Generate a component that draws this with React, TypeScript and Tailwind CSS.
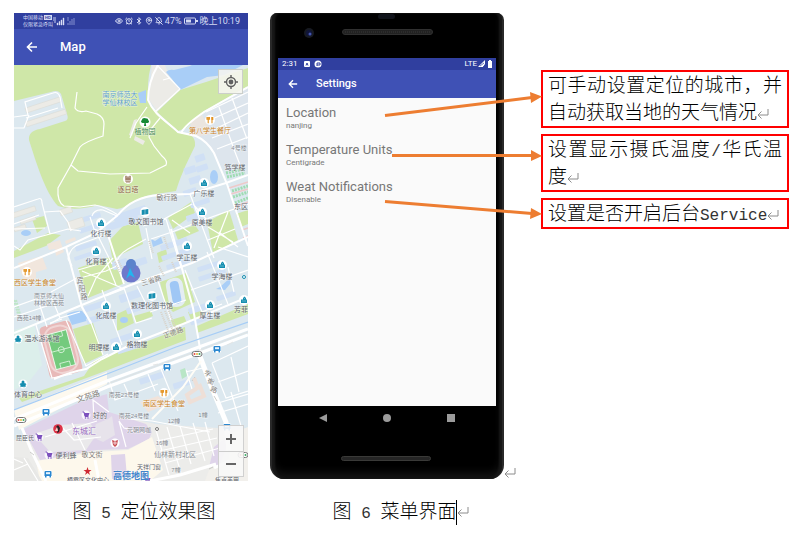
import React from "react";
import { Eye, AlarmClock, Bluetooth, MapPin, BellOff, LocateFixed } from "lucide-react";

type Label = { t: string; x: number; y: number; s?: number; c?: string; r?: number; b?: boolean };

const ORANGE = "#c98224";
const GRAY = "#858a91";
const ROAD = "#84807a";

const labels: Label[] = [
  { t: "南京师范大", x: 120, y: 97, c: "#5e9fd0" },
  { t: "学仙林校区", x: 120, y: 105, c: "#5e9fd0" },
  { t: "植物园", x: 145, y: 134, c: "#4f8d62" },
  { t: "第八学生餐厅", x: 210, y: 133, c: ORANGE },
  { t: "4号楼", x: 239, y: 150, c: GRAY, s: 6 },
  { t: "笃学楼", x: 235, y: 170 },
  { t: "逐日塔", x: 128, y: 192, c: "#8b5f45" },
  { t: "敏行路", x: 167, y: 200, c: ROAD },
  { t: "广乐楼", x: 204, y: 196 },
  { t: "东区", x: 241, y: 209 },
  { t: "敬文图书馆", x: 146, y: 224 },
  { t: "原美楼", x: 202, y: 225 },
  { t: "化行楼", x: 101, y: 236 },
  { t: "化育楼", x: 96, y: 264 },
  { t: "学正楼", x: 187, y: 260 },
  { t: "学海楼", x: 222, y: 279 },
  { t: "西区学生食堂", x: 35, y: 285, c: ORANGE },
  { t: "南京师大仙", x: 49, y: 298, c: GRAY, s: 6 },
  { t: "林校区西苑", x: 49, y: 305, c: GRAY, s: 6 },
  { t: "宾", x: 80, y: 283, c: ROAD },
  { t: "阳", x: 82, y: 291, c: ROAD },
  { t: "路", x: 84, y: 299, c: ROAD },
  { t: "三省路", x: 152, y: 283, c: ROAD, r: -17 },
  { t: "数理化图书馆", x: 152, y: 308 },
  { t: "化成楼", x: 106, y: 318 },
  { t: "西苑14幢", x: 29, y: 320, c: GRAY, s: 6 },
  { t: "厚生楼", x: 210, y: 318 },
  { t: "芳菲", x: 241, y: 312 },
  { t: "正德路", x: 174, y: 335, c: ROAD, r: -20 },
  { t: "温水游泳馆", x: 42, y: 341 },
  { t: "明理楼", x: 99, y: 350 },
  { t: "格物楼", x: 137, y: 347 },
  { t: "体育中心", x: 28, y: 397 },
  { t: "文苑路", x: 89, y: 399, c: ROAD, r: -17, s: 8 },
  { t: "南苑23号楼", x: 124, y: 397, c: GRAY, s: 6 },
  { t: "南区学生食堂", x: 164, y: 406, c: ORANGE },
  { t: "学", x: 207, y: 376, c: ROAD, r: 20 },
  { t: "衡", x: 210, y: 384, c: ROAD, r: 20 },
  { t: "路", x: 213, y: 392, c: ROAD, r: 20 },
  { t: "好的", x: 100, y: 418 },
  { t: "南苑24号楼", x: 134, y: 418, c: GRAY, s: 6 },
  { t: "12幢", x: 174, y: 423, c: GRAY, s: 6 },
  { t: "1幢", x: 203, y: 417, c: GRAY, s: 6 },
  { t: "东城汇", x: 84, y: 434, c: "#9668c0", s: 8 },
  { t: "元朝网咖", x: 139, y: 432, c: GRAY, s: 6 },
  { t: "屈臣氏", x: 25, y: 440, s: 6 },
  { t: "16幢", x: 162, y: 445, c: GRAY, s: 6 },
  { t: "仙林新村北区", x: 175, y: 457, c: GRAY },
  { t: "便利蜂", x: 66, y: 458 },
  { t: "敬文街", x: 92, y: 457, c: ROAD },
  { t: "天祥门窗", x: 149, y: 469, s: 6 },
  { t: "7幢", x: 176, y: 472, c: GRAY, s: 6 },
  { t: "栖霞区文化中心", x: 88, y: 482, s: 6 },
  { t: "焦点美甲", x: 227, y: 482, s: 6 },
  { t: "高德地图", x: 131, y: 479, c: "#4385cc", s: 9, b: true },
];

const halls = [
  [204, 183], [202, 212], [101, 223], [96, 251], [187, 246], [222, 265],
  [106, 306], [210, 305], [244, 300], [137, 334], [116, 347],
];
const books = [[145, 212], [152, 296]];
const forks = [[210, 120], [27, 272], [164, 393]];
const buses = [[217, 349], [167, 367], [46, 412], [48, 474], [227, 427]];
const carts = [[86, 415], [39, 437], [49, 455], [147, 480]];
const pools = [[18, 339], [23, 384]];
const signals = [[197, 354], [21, 420], [243, 455]];

const buildings = [
  [92, 217, 18, 5], [90, 228, 22, 5], [86, 246, 22, 5], [84, 256, 20, 4],
  [130, 214, 34, 8], [122, 223, 34, 7], [174, 244, 28, 6], [176, 254, 30, 5],
  [178, 264, 24, 5], [210, 266, 26, 5], [212, 275, 28, 5], [130, 296, 22, 8],
  [138, 308, 24, 6], [96, 306, 24, 6], [98, 318, 24, 6], [124, 338, 28, 6],
  [130, 348, 26, 5], [200, 308, 24, 6], [200, 320, 20, 5], [226, 296, 20, 5],
  [190, 192, 14, 6], [200, 203, 20, 5], [196, 216, 20, 6], [190, 170, 12, 7],
  [202, 168, 12, 6], [195, 180, 12, 7], [200, 158, 10, 7], [152, 378, 26, 6],
  [182, 384, 18, 6], [120, 264, 16, 8], [140, 262, 14, 7],
];

const dorms = [
  [24, 212, 24, 5], [28, 220, 16, 4], [20, 228, 12, 4],
  [66, 211, 12, 6], [76, 224, 16, 9], [43, 105, 36, 5], [46, 118, 42, 5],
];

function MapDrawing() {
  return (
    <svg viewBox="14 65 234 416" className="block h-auto w-full" role="img" aria-label="校园地图">
      <rect x="14" y="65" width="234" height="416" fill="#dce8ef" />

      {/* parkland */}
      <g fill="#cfe7a8">
        <path d="M14 65H151Q146 85 149 102C153 114 168 124 177 132L190 135Q196 138 195 146C185 166 180 178 176 191L150 195C135 198 128 208 117 209L98 205Q74 212 58 206C45 192 36 162 29 140Q28 131 40 129L65 121Q69 120 67 114L61 94Q58 89 51 92L14 101Z" />
        <path d="M157 112L180 90L206 82L248 68V86L204 111L186 128L178 131Z" />
        <path d="M109 241L123 226L138 222L143 244L118 256L113 262Z" />
        <path d="M168 218L191 202L195 213L173 229Z" />
        <path d="M175 232L195 225L199 231L178 240Z" />
        <path d="M207 222L229 210L238 240L213 253Z" />
        <path d="M14 251L48 233L61 235L46 246L14 258Z" />
        <path d="M32 219L44 216L47 226L37 233Z" />
        <path d="M236 214L248 210V224L241 227Z" />
        <path d="M78 268L110 257L125 283L88 298Z" />
        <path d="M157 253L166 249L168 259L159 263Z" />
        <path d="M160 282L186 273L195 302L173 312L165 304Z" />
        <path d="M117 314L130 308L134 323L117 331Z" />
        <path d="M134 316L151 311L153 316L136 323Z" />
        <path d="M171 320L184 316L187 323L174 329Z" />
        <path d="M188 312L201 308L204 315L191 320Z" />
        <path d="M73 329L93 323L103 355L84 364Z" />
        <path d="M197 326L248 304V314L197 333Z" />
        <path d="M19 398L84 376L94 361L185 327L186 340L108 370L22 402Z" />
      </g>

      {/* pavement and dormitory quarters */}
      <path d="M152 65H165L170 78L180 90L157 111L149 100Z" fill="#ecebe7" />
      <path d="M205 113L248 88V165L228 178L214 151L192 132Z" fill="#dde5ed" />
      <path d="M191 121L202 115L212 134L194 137L190 131Z" fill="#ebe5df" />
      <path d="M14 330L34 324L42 365L28 383L14 390Z" fill="#dcefeb" />

      {/* water */}
      <g fill="#a9cef7">
        <path d="M166 72Q169 69 174 70L190 66L192 65H243L224 75L207 77L180 90L172 79Z" />
        <path d="M138 93L146 90V103H140Z" />
        <path d="M67 314Q77 310 82 311L90 320L72 325Z" />
        <path d="M151 239L155 241L161 237L163 243L153 247Z" />
        <path d="M220 287L231 277L230 284L225 290L216 289Z" />
        <ellipse cx="124" cy="320" rx="4" ry="3" />
        <ellipse cx="214" cy="177" rx="4" ry="7" />
        <ellipse cx="26" cy="233" rx="5" ry="3" />
      </g>
      <rect x="167" y="278" width="17" height="29" rx="7" fill="#e4edf3" transform="rotate(-10 175 292)" />
      <rect x="171" y="281" width="9" height="23" rx="4" fill="#9fc7f5" transform="rotate(-10 175 292)" />

      {buildings.map(([x, y, w, h], i) => (
        <rect key={i} x={x - w / 2} y={y - h / 2} width={w} height={h} rx="1" fill="#d0e0f5" transform={`rotate(-18 ${x} ${y})`} />
      ))}
      {dorms.map(([x, y, w, h], i) => (
        <rect key={i} x={x - w / 2} y={y - h / 2} width={w} height={h} fill="#ecebe6" stroke="#dadbd4" strokeWidth="0.5" transform={`rotate(-18 ${x} ${y})`} />
      ))}
      <path d="M134 120L137 119L132 136L129 135ZM135 136L145 141L143 145L134 140Z" fill="#ecebe6" />
      <path d="M18 263L42 256L47 269L36 272L36 279L24 281ZM47 244L60 240L64 252L56 256L55 249L49 250ZM65 241L75 237L76 240L66 244Z" fill="#f1e6dd" />
      <path d="M226 173L244 169M227 177L245 173M232 191L248 186M233 197L248 192M235 203L248 198" stroke="#9fdcb3" strokeWidth="3" strokeDasharray="2 1" />
      <path d="M229 188L248 182M231 194L248 189M235 207L248 202M242 230L248 228M243 238L248 236" stroke="#eec9c9" strokeWidth="1.5" />
      <path d="M14 300L18 314M16 300L20 314" stroke="#bfe6c8" strokeWidth="2" strokeDasharray="2 1" />

      {/* southern blocks */}
      <path d="M105 413L156 424L248 430V481H14V440L60 423Z" fill="#ececea" />
      <path d="M14 410L107 372V384L19 430Z" fill="#fdf9ef" />
      <path d="M24 429L80 402L107 394L109 412L146 424L152 432L149 439L128 449L96 450L40 460L26 434Z" fill="#dfd4ea" />
      <path d="M34 434L61 425L90 423L98 434L92 441L86 450L50 452Z" fill="#eae9eb" />
      <path d="M108 419L112 416L115 435L103 442L92 437L96 424Z" fill="#e7e3eb" />
      <path d="M36 461L96 452L128 450L152 437L158 455L163 470L150 481H40Z" fill="#fdf8ec" />
      <path d="M14 457L28 458L42 481H14Z" fill="#e8e8e6" />
      <path d="M111 455L125 454L127 477L112 479Z" fill="#dfd4ea" />
      <path d="M209 467L214 447L232 433L220 465Z" fill="#dfd4ea" />
      <path d="M232 433L248 427V481H205L209 470L229 461Z" fill="#f2f0ec" />

      {/* stadium */}
      <g transform="rotate(-15 60 349)">
        <path d="M45 327Q45 323 50 323H71Q77 323 77 328V371Q77 376 72 376H48Q43 376 43 371Z" fill="#e8b9b8" />
        <rect x="47" y="326" width="28" height="47" rx="12" fill="none" stroke="#f0d5d4" strokeWidth="2" />
        <rect x="51" y="332" width="20" height="36" fill="#74ca7d" stroke="#e9f8e9" />
        <path d="M51 350H71M56 332V337H66V332M56 368V363H66V368" stroke="#e9f8e9" fill="none" strokeWidth="0.7" />
        <circle cx="61" cy="350" r="3" fill="none" stroke="#e9f8e9" strokeWidth="0.7" />
      </g>

      {/* local streets */}
      <g fill="none" stroke="#ffffff" strokeWidth="1.2">
        <path d="M77 92L75 108Q78 113 86 111L97 114Q104 117 104 124L103 136Q84 142 80 147L71 165L78 171L110 174L150 173L166 165Q168 161 162 156L154 146L149 137L151 129L160 118" />
        <path d="M71 165L58 188Q57 202 64 206L80 207L95 205Q106 207 118 215" />
        <path d="M14 117L28 115L25 102L53 93Q58 91 60 97L62 108M14 128L24 128L29 115M26 118L58 108" />
        <path d="M157 65L180 89L155 112M147 107L136 123L130 138M163 80L170 78" />
        <path d="M206 112L248 92M210 120L248 103M213 130L248 113M212 138L248 124M217 149L248 137M219 107L235 152M232 98L247 139M235 152L242 170" />
        <path d="M14 207L38 199Q42 197 42 203L50 234M44 212L60 211L68 222L71 231M14 224L39 215M14 246L20 250L28 240L50 234L68 229L81 231M14 229L45 228" />
        <path d="M92 216Q94 209 103 210L117 216M90 217L94 229L110 235M68 259Q70 247 80 244L108 234M68 259L72 266M112 264L96 232" />
        <path d="M117 262Q118 255 128 249L146 239M146 228L152 259M143 226L166 219L181 267M151 239L172 232L206 219M164 219L192 204M172 220L190 233" />
        <path d="M190 194L214 258M193 204L206 219L248 204M208 227L233 242M214 248L228 212M208 240L235 229M219 232L238 247" />
        <path d="M78 270L102 263L108 259M80 278L106 271L119 265M88 296L96 278L113 258M82 271L122 288M106 260L116 285" />
        <path d="M14 307L50 294L60 318L80 312M37 297L47 327M14 317L47 306M51 292L77 278M60 318L50 324M90 320L103 355" />
        <path d="M50 323L62 319M66 320L86 366L108 354M36 325L52 378L72 374M102 290L122 345M124 288L136 323L152 318M106 296L124 289M137 286L148 308" />
        <path d="M158 281L171 320M185 270L202 312L222 304M191 290L248 270M207 252L228 304M218 247L248 257M228 267L234 292M150 312L186 300" />
        <path d="M109 380L115 400L158 384M148 374L155 391M124 384L130 397M161 369L178 411M186 370L192 389M181 373L203 368M212 363L226 398L248 391M212 363L248 346M218 382L248 371M231 392L241 426M218 403L248 394M218 413L248 404M231 357L239 392" />
        <path d="M156 430L169 475M167 427L181 473M180 426L191 464M193 423L205 461M205 422L214 456M157 441L213 429M160 451L217 438M165 463L220 448M119 421L124 428L146 433M119 421L126 447M61 426L74 440L101 437M45 437L97 421M72 423L85 450M94 420L93 400L109 412" />
        <path d="M119 418L152 421L210 432M14 459L23 463M24 458L38 481M14 470L28 464" />
      </g>

      {/* avenues */}
      <g fill="none" stroke="#ffffff" strokeWidth="2">
        <path d="M158 65Q148 82 148 100C154 115 168 122 178 132L196 136Q207 141 214 153L227 184L248 246" />
        <path d="M181 133Q185 125 204 112L248 87" />
        <path d="M118 215Q132 197 159 195L190 194L226 183L248 175" />
        <path d="M118 215L96 233L66 247L14 268" />
        <path d="M14 333L77 307L128 286L192 263L248 237" />
        <path d="M54 379Q70 372 86 369L102 359L132 344L183 324L248 297" />
        <path d="M171 229L193 308L201 354" />
        <path d="M108 235L124 284M66 247L82 307L91 323" />
      </g>

      {/* trunk road and metro line */}
      <path d="M14 410L102 376L176 347L248 322" fill="none" stroke="#a6cdf6" strokeWidth="1.2" />
      <path d="M14 419L107 381L199 347L248 329" fill="none" stroke="#ffffff" strokeWidth="3" />
      <path d="M14 426L107 387L200 353L248 335" fill="none" stroke="#ffffff" strokeWidth="3" />
      <path d="M107 384L200 350L248 332M153 365L158 364M227 345L233 342" fill="none" stroke="#e0e1df" strokeWidth="0.8" />
      <path d="M199 354L212 388L226 422L229 450" fill="none" stroke="#ffffff" strokeWidth="5" />
      <path d="M201 361L183 387L152 419" fill="none" stroke="#fffdf7" strokeWidth="2" />
      <path d="M22 428L32 452L46 481M95 460L99 481M216 464L180 475L150 481M214 468L229 461" fill="none" stroke="#ffffff" strokeWidth="3" />
      <path d="M214 396L217 401M30 452L34 455M192 381L195 377M209 469L213 467" fill="none" stroke="#b9b9b6" strokeWidth="0.7" />
      <path d="M115 262L120 272M118 260L123 270M161 312L169 333M165 311L173 331M168 309L176 329M149 241L153 253M164 237L168 249M159 266L164 276M172 262L176 272" stroke="#d9d3c9" strokeWidth="2" strokeDasharray="1 1" />
      <path d="M187 395L200 386L204 396L190 402ZM197 386L194 378" stroke="#eedfd7" strokeWidth="4" fill="none" />
      <path d="M180 370L185 368L187 376L182 379Z" fill="#b9e6c6" />
      <path d="M140 402L158 396L168 404L148 412Z" fill="#f1e3da" />

      {/* points of interest */}
      {halls.map(([x, y], i) => (
        <g key={i} transform={`translate(${x} ${y})`}>
          <circle r="5" fill="#fff" />
          <path d="M-3 3V-.5H-1V-2L.5-3.5L2-2V-.5H3V3Z" fill="#168eb0" />
          <path d="M0-1.5H1M-2 1H2" stroke="#a5dce8" strokeWidth=".5" />
        </g>
      ))}
      {books.map(([x, y], i) => (
        <g key={i} transform={`translate(${x} ${y})`}>
          <circle r="5" fill="#fff" />
          <path d="M-3.3-2L-.2-2.6V2.6L-3.3 3ZM.2-2.6L3.3-3V2L.2 2.6Z" fill="#168eb0" />
        </g>
      ))}
      {forks.map(([x, y], i) => (
        <g key={i} transform={`translate(${x} ${y})`}>
          <circle r="5" fill="#fff" />
          <path d="M-3-3V-.7H-.6V-3M-1.8-3V3.2M2 3.2V-3" stroke="#e39220" strokeWidth="1.1" fill="none" />
          <path d="M1.5-3H3.3V0H1.5Z" fill="#e39220" />
        </g>
      ))}
      {buses.map(([x, y], i) => (
        <g key={i} transform={`translate(${x} ${y})`}>
          <rect x="-4" y="-4" width="8" height="8" rx="2" fill="#fff" />
          <path d="M-3.5-2Q-3.5-3-2.5-3H2.5Q3.5-3 3.5-2V2H3V3.5H1.5V2H-1.5V3.5H-3V2H-3.5Z" fill="#2a87d0" />
          <rect x="-2" y="-1.8" width="4" height="2" fill="#e6f5ff" />
        </g>
      ))}
      {carts.map(([x, y], i) => (
        <g key={i} transform={`translate(${x} ${y})`}>
          <circle r="4.5" fill="#fff" opacity=".8" />
          <path d="M-3.5-3H-2L-1 1.5H2.5" stroke="#7c50bd" strokeWidth="1" fill="none" />
          <path d="M-2-2H3.5L2.5 1H-1Z" fill="#7c50bd" />
          <circle cx="-.5" cy="3" r=".8" fill="#7c50bd" /><circle cx="2" cy="3" r=".8" fill="#7c50bd" />
        </g>
      ))}
      {pools.map(([x, y], i) => (
        <g key={i} transform={`translate(${x} ${y})`}>
          <circle r="4.5" fill="#fff" />
          <path d="M-3 0L-1-1V-3H1V-1L3 0L2 2H-2ZM-3 3L-1 2L1 3L3 2" fill="#168eb0" stroke="#168eb0" strokeWidth=".6" />
        </g>
      ))}
      {signals.map(([x, y], i) => (
        <g key={i} transform={`translate(${x} ${y})`}>
          <rect x="-5" y="-2.5" width="10" height="5" rx="2.5" fill="#fff" stroke="#777" />
          <circle cx="-2.5" r="1" fill="#e34b42" /><circle r="1" fill="#e7b83b" /><circle cx="2.5" r="1" fill="#38a960" />
        </g>
      ))}
      <g transform="translate(145 122)">
        <circle r="5.5" fill="#fff" />
        <path d="M-1 4L-.5 1H-2.5Q-5 0-3.3-1.7Q-2.5-4.5.2-3.8Q3.3-4 3.5-1.6Q5 0 2.7 1H.7L1.2 4Z" fill="#168a35" />
      </g>
      <g transform="translate(128 179)">
        <circle r="5" fill="#fff" />
        <path d="M-3-2H3M-2-3.3V0H2V-3.3M-3 0H3M-2 0V3H2V0M0-2V3" stroke="#8b5f45" strokeWidth=".8" fill="none" />
      </g>
      <g transform="translate(58 429)">
        <circle r="4.8" fill="#dd3246" />
        <path d="M-2-2L0-4L2-1L1 3L-1 4L0 0Z" fill="#272327" />
        <path d="M-3 2L-1-2L0 2" fill="#f0d8ce" />
      </g>
      <circle cx="115" cy="443" r="4.5" fill="#fff" />
      <path d="M112 440L115 441L118 440L117 445L115 447L113 445Z" fill="#c94e55" />
      <path d="M113 443H117M115 441V445" stroke="#fff" strokeWidth=".7" />
      <path d="M87.5 467L88.5 470H91.5L89 472L90 475L87.5 473L85 475L86 472L83.5 470H86.5Z" fill="#cf2932" />
      <circle cx="157" cy="429" r="1.5" fill="#fff" stroke="#777" />
      <circle cx="244" cy="277" r="1.5" fill="#fff" stroke="#168eb0" />

      <g fontFamily="'Liberation Sans','Noto Sans CJK SC',sans-serif" textAnchor="middle">
        {labels.map((l, i) => (
          <text
            key={i}
            x={l.x}
            y={l.y}
            fontSize={l.s ?? 7}
            fontWeight={l.b ? 700 : 400}
            fill={l.c ?? "#5f646b"}
            stroke="#ffffff"
            strokeWidth="1"
            strokeOpacity=".5"
            paintOrder="stroke"
            transform={l.r ? `rotate(${l.r} ${l.x} ${l.y})` : undefined}
          >
            {l.t}
          </text>
        ))}
      </g>

      {/* current position */}
      <circle cx="131" cy="273" r="9.5" fill="#5b64c4" opacity=".85" />
      <path d="M126 264A5 5 0 0 1 136 264Q136 267 131 273Q126 267 126 264Z" fill="#5c82cc" />
      <path d="M130 268L135 278L130 275L126 279Z" fill="#22b5ef" />
    </svg>
  );
}

function BackArrow({ size }: { size: number }) {
  return (
    <svg width={size} height={size} viewBox="0 0 12 12" fill="none" stroke="currentColor" strokeWidth="1.6" aria-hidden="true">
      <path d="M11 6H2M6 1.5L1.5 6L6 10.5" />
    </svg>
  );
}

function ReturnMark() {
  return (
    <svg width="12" height="12" viewBox="0 0 12 12" fill="none" stroke="#8c8c8c" className="inline-block shrink-0" aria-hidden="true">
      <path d="M11 1V7H1M4.5 3.5L1 7L4.5 10.5" />
    </svg>
  );
}

function Signal() {
  return (
    <svg width="22" height="9" viewBox="0 0 22 9" aria-hidden="true">
      <path d="M0 1H3M0 3H3M1 5H3" stroke="#c9cfef" />
      <path d="M4 8V6H5V8ZM6 8V4.5H7V8ZM8 8V3H9V8ZM10 8V1H11V8Z" fill="#d9ddf5" stroke="#d9ddf5" strokeWidth=".4" />
      <path d="M14 1H16M14 3H16M15 8V6M17 8V4M19 8V2M21 8V1" stroke="#8490cf" />
    </svg>
  );
}

function MapPhone() {
  return (
    <section className="flex flex-col" aria-label="Map">
      <div className="flex h-4 items-center bg-[#303f9f] pr-2 pl-[9px] text-[#d5daf3]">
        <div className="flex flex-col text-[5px] leading-[7px]">
          <span className="flex items-center">中国移动<b className="ml-px bg-[#d5daf3] px-px text-[4px] leading-[5px] text-[#303f9f]">HD</b></span>
          <span>仅限紧急呼叫</span>
        </div>
        <Signal />
        <div className="ml-auto flex items-center gap-[2px] text-[9px] leading-4 whitespace-nowrap">
          <Eye size={8} strokeWidth={3} /><AlarmClock size={8} strokeWidth={3} /><Bluetooth size={8} strokeWidth={3} /><MapPin size={8} strokeWidth={3} /><BellOff size={8} strokeWidth={3} />
          <span className="font-['Roboto']">47%</span>
          <svg width="14" height="8" viewBox="0 0 14 8" aria-hidden="true">
            <rect x=".5" y="1" width="11" height="6" rx="1" fill="none" stroke="currentColor" />
            <path d="M2 2.5H7V5.5H2ZM12 3H14V5H12Z" fill="currentColor" />
          </svg>
          <span className="font-['Roboto','Noto_Sans_CJK_SC',sans-serif]">晚上10:19</span>
        </div>
      </div>
      <header className="flex h-9 items-center gap-[22px] bg-[#3f51b5] px-3 text-white">
        <button type="button" aria-label="返回"><BackArrow size={12} /></button>
        <h2 className="font-['Roboto'] text-[13px] font-medium">Map</h2>
      </header>
      <div className="relative">
        <MapDrawing />
        <button type="button" aria-label="定位" className="absolute top-1 right-[5px] grid size-[25px] place-items-center border border-[#cccfca] bg-[#f5f5f0]/90 text-[#606060]">
          <svg width="14" height="14" viewBox="0 0 14 14" fill="none" stroke="currentColor" strokeWidth="1.4">
            <circle cx="7" cy="7" r="4.5" /><circle cx="7" cy="7" r="2.4" fill="currentColor" stroke="none" />
            <path d="M7 0V2.500M7 11.500V14M0 7H2.500M11.500 7H14" />
          </svg>
        </button>
        <div className="absolute right-1 bottom-1 flex w-[26px] flex-col border border-[#d0d0d0] bg-[#f8f8f8]/90 text-[#666]">
          <button type="button" aria-label="放大" className="grid h-[26px] place-items-center border-b border-[#cccccc]">
            <svg width="12" height="12" viewBox="0 0 12 12" stroke="currentColor" strokeWidth="2"><path d="M1 6H11M6 1V11" /></svg>
          </button>
          <button type="button" aria-label="缩小" className="grid h-6 place-items-center">
            <svg width="12" height="12" viewBox="0 0 12 12" stroke="currentColor" strokeWidth="2"><path d="M1 6H11" /></svg>
          </button>
        </div>
      </div>
    </section>
  );
}

const settings = [
  ["Location", "nanjing"],
  ["Temperature Units", "Centigrade"],
  ["Weat Notifications", "Disenable"],
];

function SettingsPhone() {
  return (
    <section className="relative font-['Roboto']" aria-label="Settings">
      <div className="overflow-hidden rounded-t-[7px] rounded-b-[14px] border-x-2 border-[#292929] bg-black px-[6px] shadow-[inset_3px_0_2px_#181818,inset_-3px_0_2px_#181818,inset_0_-6px_8px_#151515]">
        <svg viewBox="278 13 218 45" className="block h-[45px] w-full" aria-hidden="true">
          <rect x="378" y="14" width="17" height="5" rx="2.5" fill="#10131a" />
          <circle cx="309" cy="33" r="5" fill="#171a22" /><circle cx="309" cy="33" r="3" fill="#10153a" />
          <circle cx="310" cy="34" r="1.5" fill="#4456ad" />
          <rect x="342.5" y="29.5" width="90" height="5" rx="2.5" fill="#222" stroke="#303030" />
          <path d="M345 32H430" stroke="#383838" strokeDasharray="1 1" />
        </svg>
        <div className="flex h-3 items-center bg-[#303f9f] px-1 text-[8px] text-white">
          <span>2:31</span>
          <svg width="20" height="8" viewBox="0 0 20 8" className="ml-[6px]" aria-hidden="true">
            <rect x="1" y="1" width="6" height="6" rx="1" fill="#fff" /><path d="M3 5.5L4 3L5 5.5" stroke="#303f9f" fill="none" />
            <circle cx="15" cy="4" r="3.5" fill="#fff" /><path d="M14 6V3H17V5H14" stroke="#303f9f" fill="none" />
          </svg>
          <span className="ml-auto">LTE</span>
          <svg width="15" height="8" viewBox="0 0 15 8" aria-hidden="true">
            <path d="M1 7L8 0V4L6 7Z" fill="#fff" /><path d="M3 6L7 3M6 7L8 5" stroke="#303f9f" strokeWidth=".7" />
            <path d="M11 1H12V0H14V1H15V8H11Z" fill="#fff" />
          </svg>
        </div>
        <header className="flex h-7 items-center gap-[18px] bg-[#3f51b5] px-[10px] text-white">
          <button type="button" aria-label="Back"><BackArrow size={10} /></button>
          <h2 className="text-[11px] font-medium">Settings</h2>
        </header>
        <div className="h-[308px] bg-[#fafafa] px-2 pt-[7px] text-[#777]">
          {settings.map(([title, value]) => (
            <button type="button" key={title} className="mb-[7px] block w-full text-left">
              <span className="block text-[13px] leading-4">{title}</span>
              <span className="block h-[14px] text-[8px] leading-[10px]">{value}</span>
            </button>
          ))}
        </div>
        <nav className="flex h-6 items-center justify-between px-10 text-[#9b9b9b]" aria-label="Navigation">
          <button type="button" aria-label="Back">
            <svg width="10" height="10" viewBox="0 0 10 10"><path d="M9 1V9L1 5Z" fill="currentColor" /></svg>
          </button>
          <button type="button" aria-label="Home">
            <svg width="10" height="10" viewBox="0 0 10 10"><circle cx="5" cy="5" r="4" fill="currentColor" /></svg>
          </button>
          <button type="button" aria-label="Recent">
            <svg width="10" height="10" viewBox="0 0 10 10"><path d="M1 1H9V9H1Z" fill="currentColor" /></svg>
          </button>
        </nav>
        <svg viewBox="278 430 218 49" className="block h-[49px] w-full" aria-hidden="true">
          <rect x="341.5" y="456.5" width="89" height="4" rx="2" fill="#252525" stroke="#3a3a38" />
        </svg>
      </div>
      <svg viewBox="270 13 272 466" className="pointer-events-none absolute top-0 left-0 w-[272px] max-w-none" aria-hidden="true">
        <g stroke="#ed7d31" strokeWidth="3">
          <path d="M385 115.5L532 97.5M392 155.5H532M385 201.5L532 213.5" />
        </g>
        <path d="M530 92L542 96.5L531 103ZM531 150L542 156L531 161ZM531 208L542 214L530 219Z" fill="#ed7d31" />
      </svg>
    </section>
  );
}

function Note({ children }: { children: React.ReactNode }) {
  return (
    <p className="border-2 border-[#f00] px-[5px] text-justify text-[19px] leading-[27px] font-light text-black">{children}</p>
  );
}

function Latin({ children }: { children: React.ReactNode }) {
  return <span className="font-['Liberation_Mono'] text-[16px] leading-none text-[#333]">{children}</span>;
}

export default function App() {
  return (
    <main className="flex items-start bg-white pt-[13px] pr-[14px] pb-3 pl-[14px] font-['Liberation_Sans','Noto_Sans_CJK_SC',sans-serif]">
      <figure className="w-[234px] shrink-0">
        <MapPhone />
        <figcaption className="mt-[17px] pl-[26px] text-center text-[19px] leading-7 font-light">
          图<Latin> 5 </Latin>定位效果图
        </figcaption>
      </figure>
      <figure className="ml-[22px] w-[234px] shrink-0">
        <SettingsPhone />
        <figcaption className="mt-[19px] flex items-center justify-center pl-7 text-[19px] leading-7 font-light">
          <span className="whitespace-nowrap">图<Latin> 6 </Latin>菜单界面</span>
          <span className="h-[25px] w-px bg-black" />
          <ReturnMark />
        </figcaption>
      </figure>
      <div className="flex h-[466px] w-[37px] shrink-0 items-end"><ReturnMark /></div>
      <aside className="mt-[57px] flex min-w-0 flex-1 flex-col gap-[6px]">
        <Note>可手动设置定位的城市，并自动获取当地的天气情况<ReturnMark /></Note>
        <Note>设置显示摄氏温度<Latin>/</Latin>华氏温度<ReturnMark /></Note>
        <Note>设置是否开启后台<Latin>Service</Latin><ReturnMark /></Note>
      </aside>
    </main>
  );
}
